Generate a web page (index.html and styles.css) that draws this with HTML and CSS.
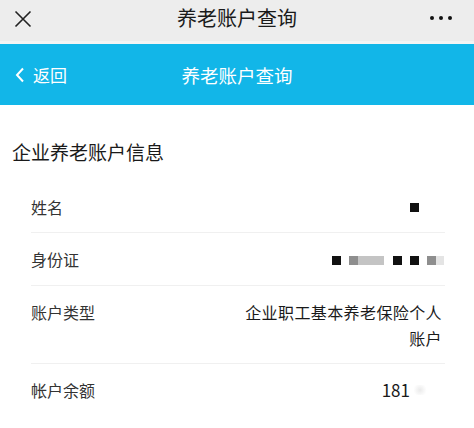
FILE: index.html
```html
<!DOCTYPE html>
<html lang="zh-CN">
<head>
    <meta charset="UTF-8">
    <meta name="viewport" content="width=device-width, initial-scale=1.0">
    <title>养老账户查询</title>
    <link rel="stylesheet" href="styles.css">
</head>
<body>
    <!-- wechat title bar -->
    <div class="wx-bar">
        <svg class="wx-close" width="18" height="18" viewBox="0 0 18 18">
            <path d="M1.5 1.5 L16.5 16.5 M16.5 1.5 L1.5 16.5" stroke="#222" stroke-width="1.6" fill="none"/>
        </svg>
        <div class="wx-title">养老账户查询</div>
        <div class="wx-more"><span></span><span></span><span></span></div>
    </div>

    <!-- page header -->
    <div class="header">
        <div class="back">
            <svg width="10" height="16" viewBox="0 0 10 16">
                <path d="M8 1.5 L2 8 L8 14.5" stroke="#fff" stroke-width="2" fill="none"/>
            </svg>
            <span>返回</span>
        </div>
        <div class="header-title">养老账户查询</div>
    </div>

    <div class="section">
        <h2 class="section-title">企业养老账户信息</h2>
        <div class="info-list">
            <div class="info-row">
                <div class="label">姓名</div>
                <div class="value">
                    <span class="blur-box dark"></span>
                </div>
            </div>
            <div class="info-row">
                <div class="label">身份证</div>
                <div class="value id-value">
                    <span class="blur-box dark"></span>
                    <span class="blur-box mid"></span>
                    <span class="blur-box light wide"></span>
                    <span class="blur-box dark gap"></span>
                    <span class="blur-box dark"></span>
                    <span class="blur-box mid"></span>
                    <span class="blur-box faint"></span>
                </div>
            </div>
            <div class="info-row">
                <div class="label">账户类型</div>
                <div class="value text-value">企业职工基本养老保险个人账户</div>
            </div>
            <div class="info-row last">
                <div class="label">帐户余额</div>
                <div class="value amount">181<span class="smudge"></span></div>
            </div>
        </div>
    </div>
</body>
</html>
```

FILE: styles.css
```css
  body {
      margin: 0;
      padding: 0;
      font-family: "Noto Sans CJK SC", "Noto Sans", sans-serif;
      background-color: #ffffff;
      color: #222;
  }
  .wx-bar {
      height: 44px;
      background-color: #ededed;
      display: flex;
      align-items: center;
      justify-content: space-between;
      padding: 0 22px 0 14px;
      box-sizing: border-box;
      border-bottom: 3px solid #f4f4f4;
  }
  .wx-close {
      display: block;
      margin-top: -3px;
  }
  .wx-title {
      font-size: 20px;
      color: #1a1a1a;
      margin-top: -7px;
      margin-left: 12px;
  }
  .wx-more {
      display: flex;
      gap: 5px;
      margin-top: -6px;
  }
  .wx-more span {
      width: 4px;
      height: 4px;
      border-radius: 50%;
      background: #111;
  }
  .header {
      height: 61px;
      background-color: #12b6e8;
      color: #ffffff;
      display: flex;
      align-items: center;
      position: relative;
  }
  .back {
      display: flex;
      align-items: center;
      gap: 8px;
      padding-left: 15px;
      font-size: 17px;
  }
  .back svg {
      display: block;
  }
  .header-title {
      position: absolute;
      left: 0;
      right: 0;
      text-align: center;
      font-size: 18.5px;
      pointer-events: none;
  }
  .section {
      padding: 33px 0 0 12px;
  }
  .section-title {
      margin: 0;
      font-size: 19px;
      font-weight: normal;
      line-height: 28px;
      color: #1a1a1a;
  }
  .info-list {
      margin: 15px 29px 0 19px;
  }
  .info-row {
      display: flex;
      justify-content: space-between;
      align-items: flex-start;
      padding: 13px 0 12px;
      border-bottom: 1px solid #f0f0f0;
      font-size: 16px;
      line-height: 26px;
  }
  .info-row.last {
      border-bottom: none;
  }
  .label {
      color: #333;
      flex-shrink: 0;
  }
  .value {
      color: #1a1a1a;
      text-align: right;
      display: flex;
      align-items: center;
      justify-content: flex-end;
      min-height: 26px;
  }
  .text-value {
      display: block;
      width: 200px;
      letter-spacing: 0.4px;
      padding-right: 3px;
  }
  .blur-box {
      display: inline-block;
      width: 9px;
      height: 9px;
      margin-left: 8px;
  }
  .blur-box.dark { background: #111; }
  .blur-box.mid { background: #8e8e8e; }
  .blur-box.light { background: #c4c4c4; margin-left: 0; width: 26px; }
  .blur-box.faint { background: #e4e4e4; margin-left: 0; width: 8px; }
  .blur-box.gap { margin-left: 9px; }
  .info-row:first-child .blur-box {
      margin-right: 26px;
  }
  .id-value {
      margin-top: 1px;
      margin-right: 1px;
  }
  .amount {
      padding-right: 17px;
      font-size: 17px;
  }
  .smudge {
      display: inline-block;
      width: 16px;
      height: 10px;
      margin-left: 2px;
      background: radial-gradient(circle, #eaeaea 0, rgba(255,255,255,0) 70%);
  }
```
